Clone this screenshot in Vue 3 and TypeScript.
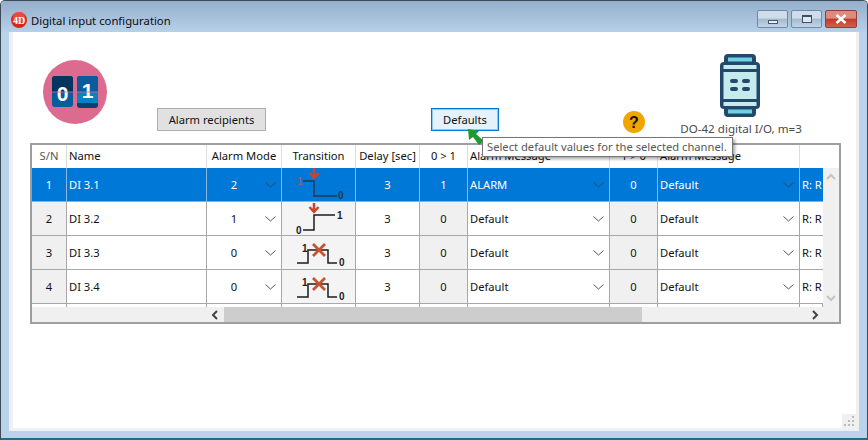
<script setup lang="ts">
interface Row {
  sn: number
  name: string
  mode: number
  kind: 'down' | 'up' | 'none'
  on: number
  onMsg: string
}
const rows: Row[] = [
  { sn: 1, name: 'DI 3.1', mode: 2, kind: 'down', on: 1, onMsg: 'ALARM' },
  { sn: 2, name: 'DI 3.2', mode: 1, kind: 'up', on: 0, onMsg: 'Default' },
  { sn: 3, name: 'DI 3.3', mode: 0, kind: 'none', on: 0, onMsg: 'Default' },
  { sn: 4, name: 'DI 3.4', mode: 0, kind: 'none', on: 0, onMsg: 'Default' },
]
</script>

<template>
  <div class="window">
    <header class="titlebar">
      <svg class="app-icon" width="16" height="16" viewBox="0 0 16 16">
        <circle cx="8" cy="8" r="8" fill="#d8281c" />
        <circle cx="8" cy="5" r="6" fill="#ef6a5c" opacity=".55" />
        <text x="8" y="12" text-anchor="middle" class="app-icon-text">4D</text>
      </svg>
      <span class="title">Digital input configuration</span>
      <div class="win-buttons">
        <div class="win-btn">
          <span class="glyph-min"></span>
        </div>
        <div class="win-btn">
          <span class="glyph-max"></span>
        </div>
        <div class="win-btn close">
          <svg width="14" height="10" viewBox="0 0 14 10">
            <path d="M2.5 1 L11.5 9 M11.5 1 L2.5 9" stroke="#fff" stroke-width="2.6" />
          </svg>
        </div>
      </div>
    </header>

    <main class="client">
      <section class="toolbar">
        <svg class="logo" width="64" height="64" viewBox="0 0 64 64">
          <circle cx="32" cy="32" r="32" fill="#dd6a8f" />
          <rect x="9" y="16" width="21" height="31" rx="3" fill="#075c9c" />
          <path d="M9 32 V19 a3 3 0 0 1 3 -3 h15 a3 3 0 0 1 3 3 V32 Z" fill="#07345f" />
          <rect x="34" y="16" width="21" height="32" rx="3" fill="#07416f" />
          <path d="M34 32 V19 a3 3 0 0 1 3 -3 h15 a3 3 0 0 1 3 3 V32 Z" fill="#0a5c9c" />
          <rect x="34" y="32" width="21" height="11" fill="#0a82bd" />
          <text x="19.5" y="41" text-anchor="middle" class="logo-text">0</text>
          <text x="44.5" y="38" text-anchor="middle" class="logo-text">1</text>
          <path d="M9 32 H55" stroke="#d9688c" stroke-width=".8" />
        </svg>
        <button class="btn recipients">Alarm recipients</button>
        <div class="defaults-wrap">
          <button class="btn defaults">Defaults</button>
        </div>
        <svg class="help" width="22" height="22" viewBox="0 0 22 22">
          <circle cx="11" cy="11" r="11" fill="#efa600" />
          <text x="11" y="16.500" text-anchor="middle" class="help-text">?</text>
        </svg>
        <div class="device">
          <svg class="device-icon" width="40" height="65" viewBox="0 0 40 65">
            <rect x="4" y="1" width="32" height="63" rx="4" fill="#23486b" />
            <rect x="0" y="9" width="40" height="47" rx="4" fill="#23486b" />
            <rect x="8" y="4.500" width="24" height="4" fill="#6cd3e2" />
            <rect x="8" y="56.500" width="24" height="4" fill="#6cd3e2" />
            <rect x="3.500" y="12" width="33" height="4" fill="#c5ebee" />
            <rect x="3.500" y="49" width="33" height="4" fill="#c5ebee" />
            <rect x="3.500" y="19" width="33" height="27" fill="#c5ebee" />
            <rect x="10" y="26" width="8" height="4" rx="2" fill="#23486b" />
            <rect x="22" y="26" width="8" height="4" rx="2" fill="#23486b" />
            <rect x="10" y="34" width="8" height="4" rx="2" fill="#23486b" />
            <rect x="22" y="34" width="8" height="4" rx="2" fill="#23486b" />
          </svg>
          <span class="device-label">DO-42 digital I/O, m=3</span>
        </div>
      </section>

      <section class="table-frame">
        <div class="grid header">
          <div class="cell c muted">S/N</div>
          <div class="cell l">Name</div>
          <div class="cell c">Alarm Mode</div>
          <div class="cell c">Transition</div>
          <div class="cell c">Delay [sec]</div>
          <div class="cell c">0 &gt; 1</div>
          <div class="cell l">Alarm Message</div>
          <div class="cell c">1 &gt; 0</div>
          <div class="cell l">Alarm Message</div>
          <div class="cell"></div>
        </div>
        <div class="table-main">
          <div class="table-body">
            <div v-for="r in rows" :key="r.sn" class="grid row" :class="{ selected: r.sn === 1 }">
              <div class="cell c shade">{{ r.sn }}</div>
              <div class="cell l">{{ r.name }}</div>
              <div class="cell combo mode">
                <span class="combo-value">{{ r.mode }}</span>
                <svg class="chev" width="11" height="6" viewBox="0 0 11 6"><path d="M.5 .5 L5.500 5 L10.500 .5" /></svg>
              </div>
              <div class="cell trans">
                <svg class="wave" width="72" height="33" viewBox="0 0 72 33">
                  <g v-if="r.kind === 'down'">
                    <path d="M21 13 H32 V28 H55" />
                    <text x="15" y="17" class="wave-num dim">1</text>
                    <text x="56" y="31" class="wave-num">0</text>
                    <path d="M32 0 V9 M27.500 5 L32 10 L36.500 5" class="red-arrow" />
                  </g>
                  <g v-else-if="r.kind === 'up'">
                    <path d="M21 28 H32 V13 H53" />
                    <text x="55" y="17" class="wave-num">1</text>
                    <text x="14" y="32" class="wave-num">0</text>
                    <path d="M32 1 V9 M27.500 5 L32 10 L36.500 5" class="red-arrow" />
                  </g>
                  <g v-else>
                    <path d="M15 27 H26 V14 H46 V27 H55" />
                    <text x="20" y="16" class="wave-num">1</text>
                    <text x="57" y="30" class="wave-num">0</text>
                    <path d="M31 8 L43 20 M43 8 L31 20" class="red-x" />
                  </g>
                </svg>
              </div>
              <div class="cell c">3</div>
              <div class="cell c shade">{{ r.on }}</div>
              <div class="cell combo">
                <span class="combo-text">{{ r.onMsg }}</span>
                <svg class="chev" width="11" height="6" viewBox="0 0 11 6"><path d="M.5 .5 L5.500 5 L10.500 .5" /></svg>
              </div>
              <div class="cell c shade">0</div>
              <div class="cell combo">
                <span class="combo-text">Default</span>
                <svg class="chev" width="11" height="6" viewBox="0 0 11 6"><path d="M.5 .5 L5.500 5 L10.500 .5" /></svg>
              </div>
              <div class="cell l clip">R: R</div>
            </div>
            <div class="grid stub">
              <div class="cell"></div><div class="cell"></div><div class="cell"></div><div class="cell"></div><div class="cell"></div>
              <div class="cell"></div><div class="cell"></div><div class="cell"></div><div class="cell"></div><div class="cell"></div>
            </div>
            <div class="hscroll">
              <svg class="sb-arrow" width="8" height="10" viewBox="0 0 8 10"><path d="M6 1 L2 5 L6 9" /></svg>
              <div class="thumb"></div>
              <svg class="sb-arrow" width="8" height="10" viewBox="0 0 8 10"><path d="M2 1 L6 5 L2 9" /></svg>
            </div>
          </div>
          <div class="vscroll">
            <svg class="sb-v" width="10" height="8" viewBox="0 0 10 8"><path d="M1 6 L5 2 L9 6" /></svg>
            <svg class="sb-v" width="10" height="8" viewBox="0 0 10 8"><path d="M1 2 L5 6 L9 2" /></svg>
          </div>
        </div>
      </section>

      <div class="grip">
        <svg width="14" height="14" viewBox="0 0 14 14">
          <g fill="#b8bcc0">
            <rect x="10" y="2" width="2" height="2" /><rect x="6" y="6" width="2" height="2" /><rect x="10" y="6" width="2" height="2" />
            <rect x="2" y="10" width="2" height="2" /><rect x="6" y="10" width="2" height="2" /><rect x="10" y="10" width="2" height="2" />
          </g>
        </svg>
      </div>
    </main>

    <svg class="pointer" width="18" height="18" viewBox="0 0 18 18">
      <path d="M1 0 L12 2 L9 5 L17 12 L12 16 L6 8 L2 11 Z" fill="#1f9a2c" />
    </svg>
    <div class="tooltip">Select default values for the selected channel.</div>
  </div>
</template>

<style>
html, body { margin: 0; background: #fff; }
</style>

<style scoped>
.window {
  position: relative;
  width: 868px;
  height: 440px;
  box-sizing: border-box;
  display: flex;
  flex-direction: column;
  overflow: hidden;
  background: #b9d3ec;
  border: 1px solid #3e4a55;
  border-bottom: 2px solid #1c6f86;
  border-radius: 5px 5px 0 0;
  font-family: "Noto Sans", "Open Sans", sans-serif;
  font-size: 11.2px;
  color: #111;
}
.titlebar {
  flex: none;
  height: 31px;
  box-sizing: border-box;
  display: flex;
  align-items: center;
  padding: 7px 10px 0 10px;
  background: linear-gradient(#94afcc, #b7d0e9);
}
.app-icon { flex: none; }
.app-icon-text { font: bold 10px "Liberation Serif", serif; fill: #fff; }
.title { margin-left: 4px; font-size: 11.3px; color: #0c0c0c; }
.win-buttons { margin-left: auto; display: flex; gap: 3px; margin-top: -2px; }
.win-btn {
  width: 31px;
  height: 18px;
  box-sizing: border-box;
  display: flex;
  align-items: center;
  justify-content: center;
  border: 1px solid #6f8aa7;
  border-radius: 2px;
  background: linear-gradient(#cfdcea 0 45%, #a3b9d0 50%, #c3d4e6);
}
.win-btn.close {
  width: 32px;
  border-color: #8d4038;
  background: linear-gradient(#e08a7c 0 45%, #c2392c 50%, #d0604f);
}
.glyph-min { width: 10px; height: 4px; background: #e8eef5; border: 1px solid #4a5a6c; margin-top: 5px; box-sizing: border-box; }
.glyph-max { width: 10px; height: 8px; border: 1px solid #3f5064; border-top-width: 2px; background: #dfe8f2; box-sizing: border-box; }

.client {
  position: relative;
  flex: 1;
  margin: 0 8px 7px 8px;
  background: #fff;
  border: solid #f0f0f0;
  border-width: 0 3px 3px 4px;
  min-height: 0;
  box-sizing: border-box;
}
.toolbar {
  height: 111px;
  box-sizing: border-box;
  display: flex;
  align-items: flex-end;
  padding-bottom: 12px;
  padding-left: 30px;
}
.logo { align-self: flex-start; margin-top: 28px; margin-bottom: -7px; flex: none; }
.logo-text { font: bold 21px "Liberation Sans", sans-serif; fill: #fff; }
.btn {
  height: 23px;
  box-sizing: border-box;
  padding: 0;
  font: 11.2px "Noto Sans", "Open Sans", sans-serif;
  color: #111;
  background: #e1e1e1;
  border: 1px solid #adadad;
}
.recipients { width: 109px; margin-left: 50px; }
.defaults-wrap { margin-left: 165px; }
.defaults {
  width: 68px;
  background: #e5f1fb;
  border: 1px solid #0078d7;
  box-shadow: inset 0 0 0 1px rgba(0, 120, 215, .35);
  display: block;
}
.help { margin-left: 124px; margin-bottom: -2px; flex: none; }
.help-text { font: bold 16px "Liberation Sans", sans-serif; fill: #1a1204; }
.device {
  display: flex;
  flex-direction: column;
  align-items: center;
  width: 122px;
  margin-left: 35px;
  margin-bottom: -6px;
}
.device-icon { margin-right: 3px; }
.device-label { color: #4a4a4a; font-size: 11.6px; line-height: 17px; margin-top: 2px; white-space: nowrap; }

.table-frame {
  position: relative;
  margin-left: 17px;
  width: 811px;
  height: 181px;
  box-sizing: border-box;
  border: 2px solid #9e9e9e;
  display: flex;
  flex-direction: column;
  background: #f0f0f0;
  overflow: hidden;
}
.table-main { flex: 1; display: flex; min-height: 0; }
.table-body { width: 791px; flex: none; overflow: hidden; display: flex; flex-direction: column; }
.vscroll {
  flex: 1;
  background: #f0f0f0;
  display: flex;
  flex-direction: column;
  align-items: center;
  justify-content: space-between;
  padding: 5px 0 20px;
}
.grid {
  display: grid;
  grid-template-columns: 35px 140px 75px 74px 64px 48px 142px 48px 142px 23px;
  flex: none;
}
.cell {
  box-sizing: border-box;
  border-right: 1px solid #a8a8a8;
  border-bottom: 1px solid #a8a8a8;
  background: #fff;
  display: flex;
  align-items: center;
  white-space: nowrap;
  overflow: hidden;
  min-width: 0;
}
.cell.c { justify-content: center; }
.cell.l { padding-left: 2px; }
.cell.clip { border-right: 0; }
.header { height: 23px; grid-template-columns: 35px 140px 75px 74px 64px 48px 142px 48px 142px 39px; }
.header .cell { border-bottom: 0; border-right-color: #dcdcdc; padding-bottom: 2px; }
.header .cell:last-child { border-right: 0; }
.header .muted { color: #555; }
.row { height: 34px; }
.row .shade { background: #f0f0f0; }
.row .trans { background: #f4f4f4; }
.combo { padding: 0 4px 0 2px; justify-content: space-between; }
.combo-value { width: 48px; text-align: center; margin-left: 1px; }
.chev { flex: none; margin-right: 1px; fill: none; stroke: #555; stroke-width: 1; }
.selected .cell { background: #0078d7; color: #fff; border-right-color: #8bb9e0; }
.selected .chev { stroke: #1d5a92; stroke-width: 1.2; }
.wave { display: block; flex: none; }
.wave path { fill: none; stroke: #1b1b1b; stroke-width: 1.500; }
.wave .red-arrow { stroke: #c8452a; stroke-width: 2.500; }
.wave .red-x { stroke: #c8532f; stroke-width: 2.800; }
.wave-num { font: bold 10px "Liberation Sans", sans-serif; fill: #222; }
.selected .wave path { stroke: #24384c; }
.selected .wave .red-arrow { stroke: #c8452a; }
.selected .wave-num { fill: #24384c; }
.selected .wave-num.dim { fill: #7b6a78; }
.stub { height: 3px; }
.stub .cell { border-bottom: 0; }
.hscroll {
  flex: none;
  height: 15px;
  display: flex;
  align-items: center;
  background: #f0f0f0;
}
.sb-arrow { flex: none; fill: none; stroke: #444; stroke-width: 2; margin: 0 4px; }
.hscroll .sb-arrow:first-child { margin-left: 179px; }
.thumb { height: 15px; width: 419px; background: #cdcdcd; margin-left: 1px; margin-right: 165px; }
.sb-v { flex: none; fill: none; stroke: #c4c4c4; stroke-width: 2; }
.grip { position: absolute; right: 0; bottom: 0; width: 14px; height: 14px; background: #f0f0f0; }
.grip svg { display: block; }

.tooltip {
  position: absolute;
  left: 481px;
  top: 136px;
  width: 251px;
  height: 20px;
  box-sizing: border-box;
  line-height: 18px;
  padding-left: 4px;
  border: 1px solid #767676;
  background: #fff;
  color: #575757;
  font-size: 11.2px;
  white-space: nowrap;
  box-shadow: 2px 2px 3px rgba(0, 0, 0, .35);
}
.pointer { position: absolute; left: 466px; top: 128px; }
</style>
